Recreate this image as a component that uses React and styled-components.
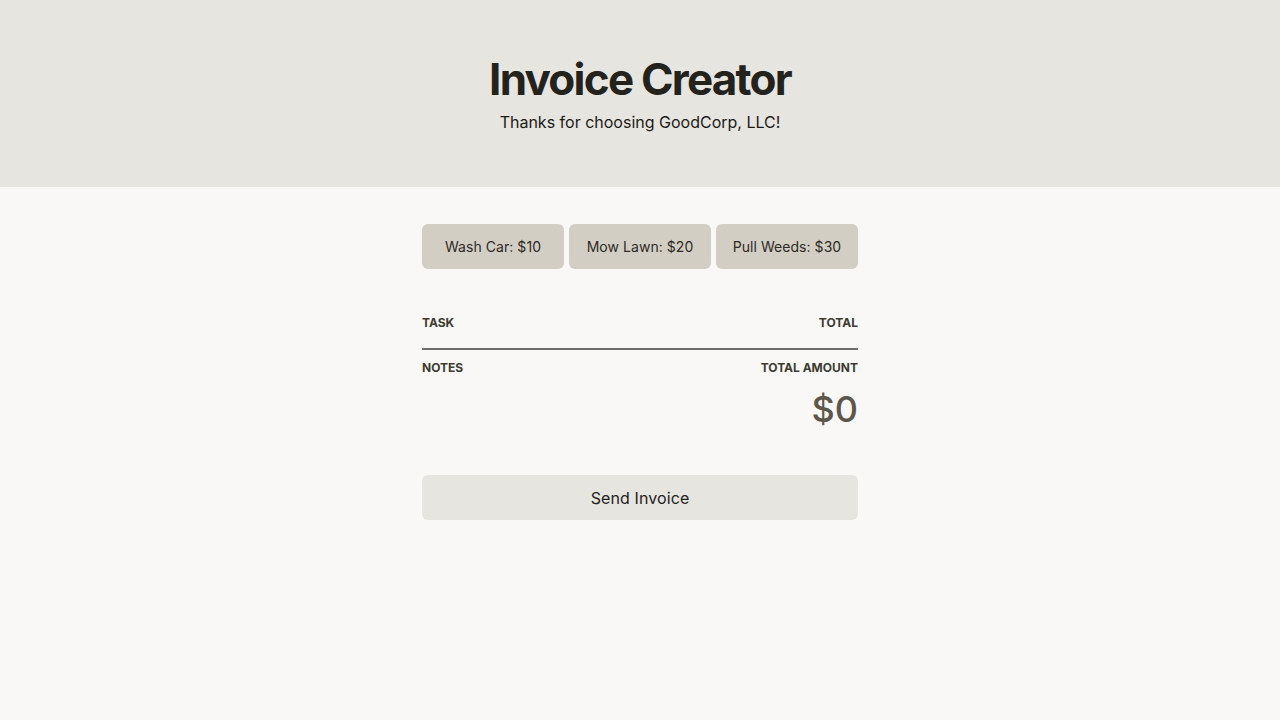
import React from "react";
import styled, { createGlobalStyle } from "styled-components";

const Global = createGlobalStyle`
  html, body { margin: 0; padding: 0; background: #f9f8f6; }
  body { font-family: Inter, "Noto Sans", sans-serif; color: #2a2822; }
  * { box-sizing: border-box; }
`;

const Header = styled.header`
  background: #e7e5e0;
  height: 187px;
  display: flex;
  flex-direction: column;
  align-items: center;
  padding-top: 54px;
`;

const Title = styled.h1`
  margin: 0;
  font-size: 44px;
  line-height: 50px;
  font-weight: 700;
  color: #24221c;
  letter-spacing: -1.75px;
`;

const Subtitle = styled.p`
  margin: 8px 0 0;
  font-size: 16px;
  line-height: 20px;
  color: #1c1a16;
`;

const Main = styled.main`
  width: 436px;
  margin: 0 auto;
  padding-top: 37px;
`;

const TaskRow = styled.div`
  display: flex;
  gap: 5px;
`;

const TaskButton = styled.button`
  flex: 1;
  height: 45px;
  border: none;
  border-radius: 6px;
  background: #d3cec4;
  font-family: inherit;
  font-size: 14px;
  letter-spacing: 0.05px;
  color: #2d2a24;
  cursor: pointer;
`;

const Table = styled.div`
  margin-top: 47px;
`;

const LabelRow = styled.div`
  display: flex;
  justify-content: space-between;
  padding-bottom: ${p => p.$pb || 0}px;
  border-bottom: ${p => (p.$rule ? "2px solid #6e6c68" : "none")};
`;

const Label = styled.span`
  font-size: 12px;
  line-height: 14px;
  font-weight: 700;
  text-transform: uppercase;
  color: #3d3a30;
`;

const Summary = styled.div`
  display: flex;
  justify-content: space-between;
  margin-top: 11px;
`;

const Col = styled.div`
  display: flex;
  flex-direction: column;
  align-items: ${p => (p.$right ? "flex-end" : "flex-start")};
`;

const Amount = styled.div`
  margin-top: 12px;
  font-size: 36px;
  line-height: 44px;
  font-weight: 500;
  color: #5c574a;
`;

const SendButton = styled.button`
  display: block;
  width: 100%;
  height: 45px;
  margin-top: 44px;
  border: none;
  border-radius: 6px;
  background: #e7e5e0;
  font-family: inherit;
  font-size: 16px;
  letter-spacing: 0.1px;
  color: #24221c;
  cursor: pointer;
`;

export default function App() {
  const tasks = [
    ["Wash Car", 10],
    ["Mow Lawn", 20],
    ["Pull Weeds", 30],
  ];
  return (
    <>
      <Global />
      <Header>
        <Title>Invoice Creator</Title>
        <Subtitle>Thanks for choosing GoodCorp, LLC!</Subtitle>
      </Header>
      <Main>
        <TaskRow>
          {tasks.map(([name, price]) => (
            <TaskButton key={name}>
              {name}: ${price}
            </TaskButton>
          ))}
        </TaskRow>
        <Table>
          <LabelRow $rule $pb={18}>
            <Label>Task</Label>
            <Label>Total</Label>
          </LabelRow>
          <Summary>
            <Col>
              <Label>Notes</Label>
            </Col>
            <Col $right>
              <Label>Total Amount</Label>
              <Amount>$0</Amount>
            </Col>
          </Summary>
        </Table>
        <SendButton>Send Invoice</SendButton>
      </Main>
    </>
  );
}
